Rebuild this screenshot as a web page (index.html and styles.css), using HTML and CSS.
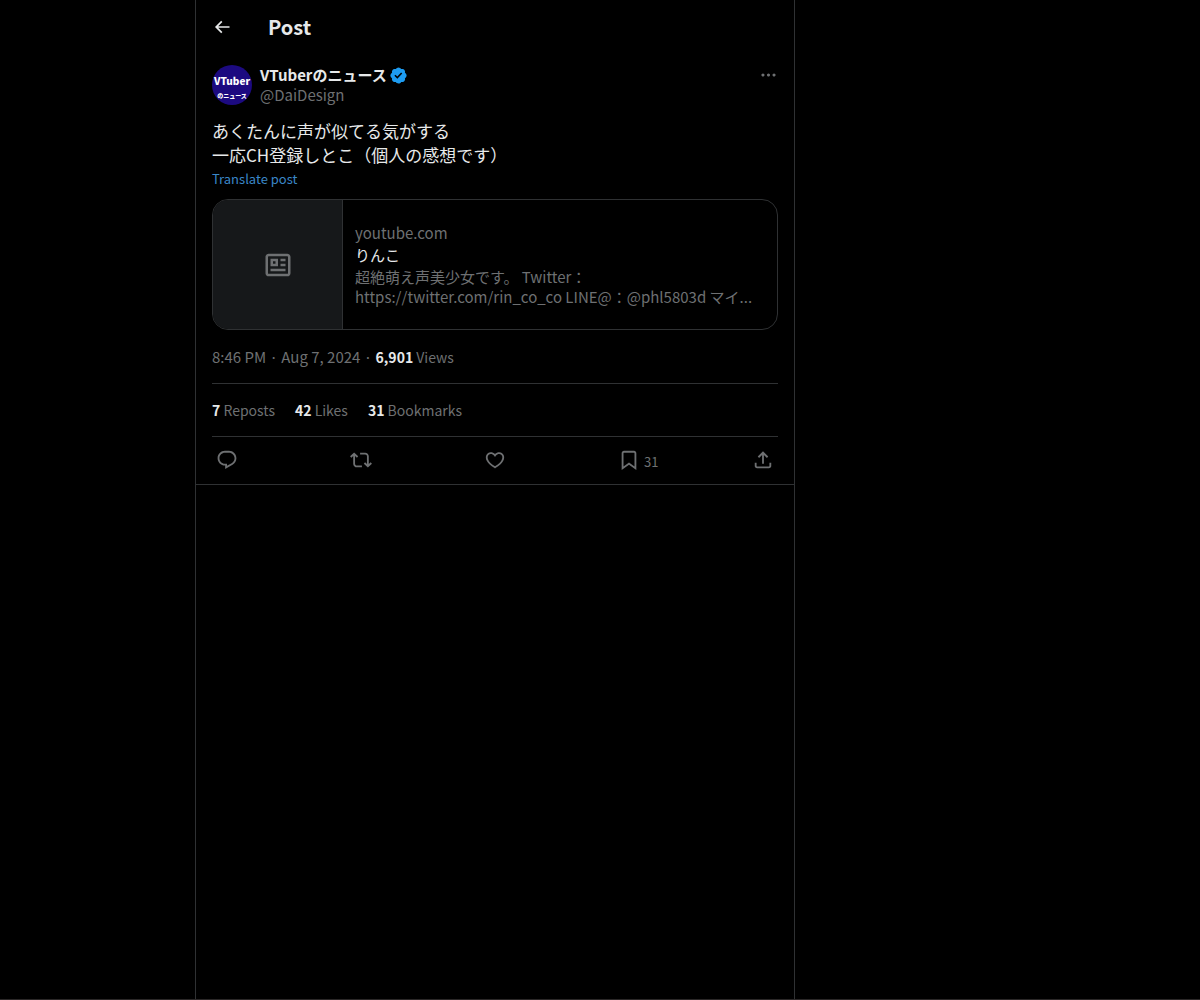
FILE: index.html
```html
<!DOCTYPE html>
<html lang="ja">
<head>
  <meta charset="UTF-8" />
  <meta name="viewport" content="width=device-width, initial-scale=1" />
  <title>Post</title>
  <link rel="stylesheet" href="styles.css">
</head>
<body>
  <main class="column">
    <!-- Top bar -->
    <header class="topbar">
      <button class="icon-btn back" type="button" aria-label="Back">
        <svg viewBox="0 0 24 24"><path d="M7.414 13l5.043 5.04-1.414 1.42L3.586 12l7.457-7.46 1.414 1.42L7.414 11H21v2H7.414z"/></svg>
      </button>
      <h1>Post</h1>
    </header>

    <article class="post">
      <!-- Author -->
      <div class="author">
        <a class="avatar" href="#" aria-label="VTuberのニュース">
          <svg viewBox="0 0 40 40">
            <circle cx="20" cy="20" r="20" fill="#1c0a80"/>
            <g fill="#fff" font-weight="900" text-anchor="middle">
              <text x="20" y="20" font-size="10">VTuber</text>
              <text x="20" y="33" font-size="6">のニュース</text>
            </g>
          </svg>
        </a>
        <div class="names">
          <a class="name" href="#">VTuberのニュース
            <svg class="badge" viewBox="0 0 22 22" aria-label="Verified account"><path d="M20.396 11c-.018-.646-.215-1.275-.57-1.816-.354-.54-.852-.972-1.438-1.246.223-.607.27-1.264.14-1.897-.131-.634-.437-1.218-.882-1.687-.47-.445-1.053-.75-1.687-.882-.633-.13-1.29-.083-1.897.14-.273-.587-.704-1.086-1.245-1.44S11.647 1.62 11 1.604c-.646.017-1.273.213-1.813.568s-.969.854-1.24 1.44c-.608-.223-1.267-.272-1.902-.14-.635.13-1.22.436-1.69.882-.445.47-.749 1.055-.878 1.688-.13.633-.08 1.29.144 1.896-.587.274-1.087.705-1.443 1.245-.356.54-.555 1.17-.574 1.817.02.647.218 1.276.574 1.817.356.54.856.972 1.443 1.245-.224.606-.274 1.263-.144 1.896.13.634.433 1.218.877 1.688.47.443 1.054.747 1.687.878.633.132 1.29.084 1.897-.136.274.586.705 1.084 1.246 1.439.54.354 1.17.551 1.816.569.647-.016 1.276-.213 1.817-.567s.972-.854 1.245-1.44c.604.239 1.266.296 1.903.164.636-.132 1.22-.447 1.68-.907.46-.46.776-1.044.908-1.681s.075-1.299-.165-1.903c.586-.274 1.084-.705 1.439-1.246.354-.54.551-1.17.569-1.816zM9.662 14.85l-3.429-3.428 1.293-1.302 2.072 2.072 4.4-4.794 1.347 1.246z"/></svg>
          </a>
          <a class="handle" href="#">@DaiDesign</a>
        </div>
        <button class="icon-btn more" type="button" aria-label="More">
          <svg viewBox="0 0 24 24"><path d="M3 12c0-1.1.9-2 2-2s2 .9 2 2-.9 2-2 2-2-.9-2-2zm9 2c1.1 0 2-.9 2-2s-.9-2-2-2-2 .9-2 2 .9 2 2 2zm7 0c1.1 0 2-.9 2-2s-.9-2-2-2-2 .9-2 2 .9 2 2 2z"/></svg>
        </button>
      </div>

      <!-- Body -->
      <p class="text">あくたんに声が似てる気がする<br>一応CH登録しとこ（個人の感想です）</p>
      <button class="translate" type="button">Translate post</button>

      <!-- Link card -->
      <a class="card" href="#">
        <span class="thumb">
          <svg viewBox="0 0 24 24"><path d="M1.998 5.5c0-1.38 1.119-2.5 2.5-2.5h15c1.381 0 2.5 1.12 2.5 2.5v13c0 1.38-1.119 2.5-2.5 2.5h-15c-1.381 0-2.5-1.12-2.5-2.5v-13zm2.5-.5c-.276 0-.5.22-.5.5v13c0 .28.224.5.5.5h15c.276 0 .5-.22.5-.5v-13c0-.28-.224-.5-.5-.5h-15zM6 7h6v6H6V7zm2 2v2h2V9H8zm10 0h-4V7h4v2zm0 4h-4v-2h4v2zm-.002 4h-12v-2h12v2z"/></svg>
        </span>
        <span class="card-info">
          <span class="muted">youtube.com</span>
          <span>りんこ</span>
          <span class="muted">超絶萌え声美少女です。 Twitter：<br>https://twitter.com/rin_co_co LINE@：@phl5803d マイ...</span>
        </span>
      </a>

      <div class="meta">
        <a href="#">8:46 PM · Aug 7, 2024</a> · <span class="views"><b>6,901</b> Views</span>
      </div>

      <div class="stats">
        <a href="#"><b>7</b> Reposts</a>
        <a href="#"><b>42</b> Likes</a>
        <a href="#"><b>31</b> Bookmarks</a>
      </div>

      <!-- Actions -->
      <div class="actions">
        <button class="icon-btn" type="button" aria-label="Reply">
          <svg viewBox="0 0 24 24"><path d="M1.751 10c0-4.42 3.584-8 8.005-8h4.366c4.49 0 8.129 3.64 8.129 8.13 0 2.96-1.607 5.68-4.196 7.11l-8.054 4.46v-3.69h-.067c-4.49.1-8.183-3.51-8.183-8.01zm8.005-6c-3.317 0-6.005 2.69-6.005 6 0 3.37 2.77 6.08 6.138 6.01l.351-.01h1.761v2.3l5.087-2.81c1.951-1.08 3.163-3.13 3.163-5.36 0-3.39-2.744-6.13-6.129-6.13H9.756z"/></svg>
        </button>
        <button class="icon-btn" type="button" aria-label="Repost">
          <svg viewBox="0 0 24 24"><path d="M4.5 3.88l4.432 4.14-1.364 1.46L5.5 7.55V16c0 1.1.896 2 2 2H13v2H7.5c-2.209 0-4-1.79-4-4V7.55L1.432 9.48.068 8.02 4.5 3.88zM16.5 6H11V4h5.5c2.209 0 4 1.79 4 4v8.45l2.068-1.93 1.364 1.46-4.432 4.14-4.432-4.14 1.364-1.46 2.068 1.93V8c0-1.1-.896-2-2-2z"/></svg>
        </button>
        <button class="icon-btn" type="button" aria-label="Like">
          <svg viewBox="0 0 24 24"><path d="M16.697 5.5c-1.222-.06-2.679.51-3.89 2.16l-.805 1.09-.806-1.09C9.984 6.01 8.526 5.44 7.304 5.5c-1.243.07-2.349.78-2.91 1.91-.552 1.12-.633 2.78.479 4.82 1.074 1.97 3.257 4.27 7.129 6.61 3.87-2.34 6.052-4.64 7.126-6.61 1.111-2.04 1.03-3.7.477-4.82-.561-1.13-1.666-1.84-2.908-1.91zm4.187 7.69c-1.351 2.48-4.001 5.12-8.379 7.67l-.503.3-.504-.3c-4.379-2.55-7.029-5.19-8.382-7.67-1.36-2.5-1.41-4.86-.514-6.67.887-1.79 2.647-2.91 4.601-3.01 1.651-.09 3.368.56 4.798 2.01 1.429-1.45 3.146-2.1 4.796-2.01 1.954.1 3.714 1.22 4.601 3.01.896 1.81.846 4.17-.514 6.67z"/></svg>
        </button>
        <button class="icon-btn" type="button" aria-label="Bookmark">
          <svg viewBox="0 0 24 24"><path d="M4 4.5C4 3.12 5.119 2 6.5 2h11C18.881 2 20 3.12 20 4.5v18.44l-8-5.71-8 5.71V4.5zM6.5 4c-.276 0-.5.22-.5.5v14.56l6-4.29 6 4.29V4.5c0-.28-.224-.5-.5-.5h-11z"/></svg>
          <span class="count">31</span>
        </button>
        <button class="icon-btn" type="button" aria-label="Share">
          <svg viewBox="0 0 24 24"><path d="M12 2.59l5.7 5.7-1.41 1.42L13 6.41V16h-2V6.41l-3.3 3.3-1.41-1.42L12 2.59zM21 15l-.02 3.51c0 1.38-1.12 2.49-2.5 2.49H5.5C4.11 21 3 19.88 3 18.5V15h2v3.5c0 .28.22.5.5.5h12.98c.28 0 .5-.22.5-.5L19 15h2z"/></svg>
        </button>
      </div>
    </article>
  </main>
</body>
</html>
```
FILE: styles.css
```css
:root {
  --text: #e7e9ea;
  --muted: #6e7072;
  --border: #2f3133;
  --link: #3a87c8;
}

* {
  box-sizing: border-box;
}

body {
  display: grid;
  grid-template-columns: 195px minmax(0, 600px) 1fr;
  min-height: 100vh;
  margin: 0;
  border-bottom: 1px solid #2b2828;
  background: #000;
  color: var(--text);
  font-family: "Noto Sans CJK JP", sans-serif;
  font-size: 15px;
  line-height: 20px;
}

a {
  color: inherit;
  text-decoration: none;
}

svg {
  display: block;
  fill: currentColor;
}

.column {
  grid-column: 2;
  border: solid var(--border);
  border-width: 0 1px;
}

.icon-btn {
  display: flex;
  align-items: center;
  padding: 0;
  border: 0;
  background: none;
  color: var(--muted);
  font: inherit;
  cursor: pointer;
}

/* Top bar */
.topbar {
  display: flex;
  align-items: center;
  gap: 36px;
  height: 53px;
  padding: 0 16px;
}

.back {
  color: var(--text);
}

.back svg {
  width: 20px;
  height: 20px;
}

h1 {
  margin: 0;
  font-size: 20px;
  line-height: 24px;
}

/* Post */
.post {
  padding: 12px 16px 0;
  border-bottom: 1px solid var(--border);
}

.author {
  display: flex;
  align-items: flex-start;
  gap: 8px;
}

.avatar svg {
  width: 40px;
  height: 40px;
}

.names {
  display: flex;
  flex: 1;
  flex-direction: column;
  align-items: flex-start;
}

.name {
  display: flex;
  align-items: center;
  gap: 2px;
  font-weight: bold;
}

.badge {
  width: 19px;
  height: 19px;
  color: #1d9bf0;
}

.handle,
.muted {
  color: var(--muted);
}

.more svg {
  width: 19px;
  height: 20px;
}

.text {
  margin: 14px 0 0;
  font-size: 17px;
  line-height: 24px;
}

.translate {
  display: block;
  padding: 0;
  border: 0;
  background: none;
  color: var(--link);
  font: inherit;
  font-size: 13px;
  line-height: 24px;
  cursor: pointer;
}

/* Link card */
.card {
  display: flex;
  margin-top: 8px;
  overflow: hidden;
  border: 1px solid var(--border);
  border-radius: 16px;
}

.thumb {
  display: flex;
  flex: none;
  align-items: center;
  justify-content: center;
  width: 130px;
  height: 129px;
  border-right: 1px solid var(--border);
  background: #16181a;
  color: var(--muted);
}

.thumb svg {
  width: 30px;
  height: 30px;
}

.card-info {
  display: flex;
  flex-direction: column;
  justify-content: center;
  gap: 2px;
  min-width: 0;
  padding: 12px;
}

.meta {
  padding: 17px 0 16px;
  color: var(--muted);
}

.views,
.stats {
  font-size: 14px;
}

.meta b,
.stats b {
  color: var(--text);
}

.stats {
  display: flex;
  gap: 20px;
  padding: 16px 0;
  border: solid var(--border);
  border-width: 1px 0;
  color: var(--muted);
}

/* Actions */
.actions {
  display: flex;
  align-items: center;
  justify-content: space-between;
  padding: 12px 4px 13px;
}

.actions .icon-btn {
  width: 22px;
  height: 22px;
}

.actions svg {
  flex: none;
  width: 22px;
  height: 22px;
}

.count {
  padding: 4px 0 0 4px;
  font-size: 13px;
}
```
